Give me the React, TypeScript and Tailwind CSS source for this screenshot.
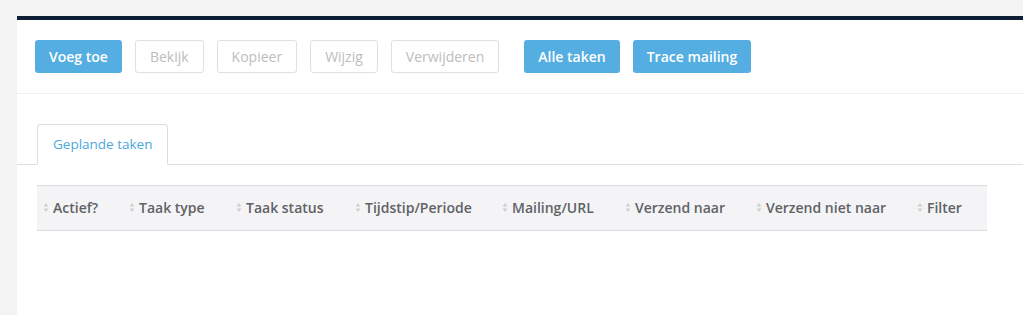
import React from 'react';

const font = { fontFamily: '"Open Sans", "Liberation Sans", sans-serif' };

const columns = [
  { label: 'Actief?', width: 86 },
  { label: 'Taak type', width: 107 },
  { label: 'Taak status', width: 119 },
  { label: 'Tijdstip/Periode', width: 147 },
  { label: 'Mailing/URL', width: 123 },
  { label: 'Verzend naar', width: 131 },
  { label: 'Verzend niet naar', width: 161 },
  { label: 'Filter', width: 76 },
];

function SortIcon() {
  return (
    <svg width="6" height="11" viewBox="0 0 6 11" className="shrink-0">
      <path d="M3 1 L5.5 4.5 L0.5 4.5 Z" fill="#cfcfcf" />
      <path d="M3 10 L5.5 6.5 L0.5 6.5 Z" fill="#cfcfcf" />
    </svg>
  );
}

function PrimaryButton({ children }: { children: React.ReactNode }) {
  return (
    <button className="h-[33px] px-[14px] rounded-[3px] bg-[#55aee1] text-white text-[14px] font-semibold leading-none">
      {children}
    </button>
  );
}

function DisabledButton({ children }: { children: React.ReactNode }) {
  return (
    <button className="h-[33px] px-[14px] rounded-[3px] border border-[#e0e0e0] bg-white text-[#bdbdbd] text-[14px] leading-none">
      {children}
    </button>
  );
}

export default function App() {
  return (
    <div className="w-[1023px] h-[315px] bg-[#f3f3f3] pt-[16px] pl-[17px] overflow-hidden" style={font}>
      <div className="w-[1100px] h-[400px] bg-white border-t-4 border-[#0b1e33]">
        {/* Toolbar */}
        <div className="flex items-center pl-[18px] pt-[20px] pb-[20px] border-b border-[#f0f0f0]">
          <div className="flex gap-[13px]">
            <PrimaryButton>Voeg toe</PrimaryButton>
            <DisabledButton>Bekijk</DisabledButton>
            <DisabledButton>Kopieer</DisabledButton>
            <DisabledButton>Wijzig</DisabledButton>
            <DisabledButton>Verwijderen</DisabledButton>
          </div>
          <div className="flex gap-[13px] ml-[25px]">
            <PrimaryButton>Alle taken</PrimaryButton>
            <PrimaryButton>Trace mailing</PrimaryButton>
          </div>
        </div>

        {/* Tabs */}
        <div className="pt-[30px] pl-[20px] border-b border-[#dddddd] flex">
          <div className="h-[41px] -mb-px px-[15px] flex items-center border border-[#dddddd] border-b-white rounded-t-[4px] bg-white text-[13.5px] text-[#4ba8de]">
            Geplande taken
          </div>
        </div>

        {/* Table header */}
        <div className="pt-[20px] pl-[20px]">
          <div className="w-[950px] h-[46px] flex bg-[#f4f4f6] border-t border-b border-[#dcdcdc]">
            {columns.map((col) => (
              <div
                key={col.label}
                className="flex items-center gap-[4px] pl-[6px] pb-px shrink-0"
                style={{ width: col.width }}
              >
                <SortIcon />
                <span className="text-[14px] font-semibold text-[#606266] whitespace-nowrap">{col.label}</span>
              </div>
            ))}
          </div>
        </div>
      </div>
    </div>
  );
}
